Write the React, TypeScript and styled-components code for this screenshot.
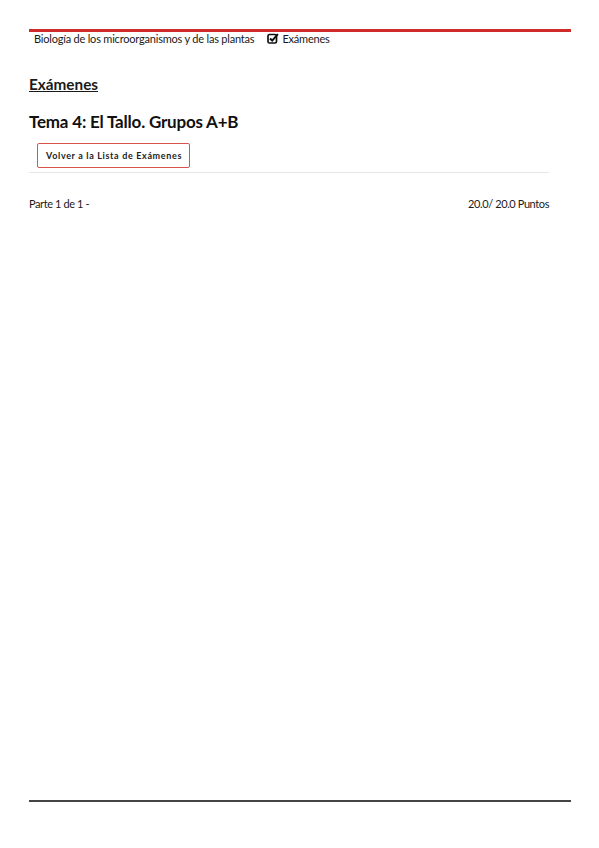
import React from 'react';
import styled, { createGlobalStyle } from 'styled-components';

const GlobalStyle = createGlobalStyle`
  html, body {
    margin: 0;
    padding: 0;
    background: #ffffff;
  }
  body {
    font-family: Lato, "Open Sans", "Liberation Sans", sans-serif;
    color: #222222;
  }
`;

const Page = styled.div`
  width: 542px;
  height: 848px;
  margin: 0 0 0 29px;
  padding-top: 29px;
  box-sizing: border-box;
  display: flex;
  flex-direction: column;
`;

const TopBar = styled.div`
  border-top: 3px solid #d02b2b;
`;

const Breadcrumb = styled.div`
  display: flex;
  align-items: center;
  gap: 13px;
  padding: 0 5px;
  height: 13px;
  font-size: 11px;
  letter-spacing: -0.2px;
  color: #1a1a1a;
`;

const Crumb = styled.span`
  display: inline-flex;
  align-items: center;
  gap: 3px;
`;

const Heading = styled.h2`
  margin: 30px 0 0;
  font-size: 15.3px;
  line-height: 18px;
  font-weight: 700;
  text-decoration: underline;
  color: #1a1a1a;
`;

const Title = styled.h1`
  margin: 19px 0 0;
  font-size: 17px;
  line-height: 20px;
  font-weight: 700;
  color: #111111;
  letter-spacing: -0.2px;
`;

const Actions = styled.div`
  width: 520px;
  padding: 11px 0 4px 8px;
  box-sizing: border-box;
  border-bottom: 1px solid #e6e6e6;
`;

const BackButton = styled.button`
  appearance: none;
  box-sizing: border-box;
  height: 25px;
  padding: 0 7px 0 8px;
  border-width: 1px;
  border-style: solid;
  border-color: #d9534f;
  border-radius: 2px;
  background: #ffffff;
  font-family: inherit;
  font-size: 9px;
  font-weight: 700;
  letter-spacing: 0.65px;
  color: #222222;
  cursor: pointer;
`;

const PartRow = styled.div`
  width: 520px;
  margin-top: 24px;
  display: flex;
  justify-content: space-between;
  font-size: 11px;
  letter-spacing: -0.4px;
  color: #1a1a1a;
`;

const Spacer = styled.div`
  flex: 1;
`;

const FooterRule = styled.div`
  height: 2px;
  margin-bottom: 46px;
  background: #444444;
`;

function CheckSquare() {
  return (
    <svg width="12" height="11" viewBox="0 0 12 11" aria-hidden="true">
      <rect x="1" y="1.5" width="8.5" height="8.5" rx="1.5" fill="none" stroke="#111" strokeWidth="1.7" />
      <path d="M3 5.5 L5.2 7.6 L10.9 1.1" fill="none" stroke="#111" strokeWidth="2.1" />
    </svg>
  );
}

export default function App() {
  return (
    <>
      <GlobalStyle />
      <Page>
        <TopBar>
          <Breadcrumb>
            <Crumb>Biología de los microorganismos y de las plantas</Crumb>
            <Crumb>
              <CheckSquare />
              Exámenes
            </Crumb>
          </Breadcrumb>
        </TopBar>
        <Heading>Exámenes</Heading>
        <Title>Tema 4: El Tallo. Grupos A+B</Title>
        <Actions>
          <BackButton type="button">Volver a la Lista de Exámenes</BackButton>
        </Actions>
        <PartRow>
          <span>Parte 1 de 1 -</span>
          <span>20.0/ 20.0 Puntos</span>
        </PartRow>
        <Spacer />
        <FooterRule />
      </Page>
    </>
  );
}
